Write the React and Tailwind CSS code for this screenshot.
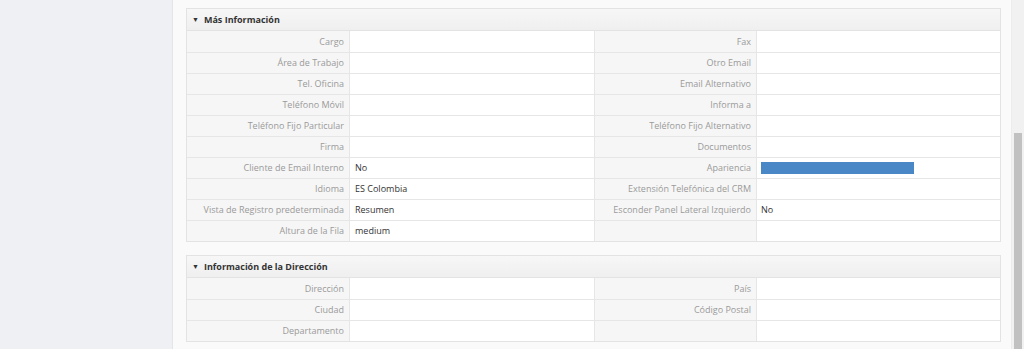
const MAS_INFO = [
  ['Cargo', '', 'Fax', ''],
  ['Área de Trabajo', '', 'Otro Email', ''],
  ['Tel. Oficina', '', 'Email Alternativo', ''],
  ['Teléfono Móvil', '', 'Informa a', ''],
  ['Teléfono Fijo Particular', '', 'Teléfono Fijo Alternativo', ''],
  ['Firma', '', 'Documentos', ''],
  ['Cliente de Email Interno', 'No', 'Apariencia', 'bar'],
  ['Idioma', 'ES Colombia', 'Extensión Telefónica del CRM', ''],
  ['Vista de Registro predeterminada', 'Resumen', 'Esconder Panel Lateral Izquierdo', 'No'],
  ['Altura de la Fila', 'medium', '', ''],
]

const DIRECCION = [
  ['Dirección', '', 'País', ''],
  ['Ciudad', '', 'Código Postal', ''],
  ['Departamento', '', '', ''],
]

function Value({ v }) {
  if (v === 'bar') {
    return <div className="h-[12px] w-[153px] bg-[#4a87c6]" />
  }
  return <span className="text-[#333]">{v}</span>
}

function Row({ r, first }) {
  return (
    <div className={`flex h-[21px] ${first ? '' : 'border-t border-[#e6e6e6]'}`}>
      <div className="flex w-[162px] items-center justify-end bg-[#f6f6f6] pr-[5px] text-[#9a9a9a]">
        {r[0]}
      </div>
      <div className="flex w-[245px] items-center border-l border-[#e6e6e6] bg-white pl-[5px]">
        <Value v={r[1]} />
      </div>
      <div className="flex w-[162px] items-center justify-end border-l border-[#e6e6e6] bg-[#f6f6f6] pr-[5px] text-[#9a9a9a]">
        {r[2]}
      </div>
      <div className="flex flex-1 items-center border-l border-[#e6e6e6] bg-white pl-[4px]">
        <Value v={r[3]} />
      </div>
    </div>
  )
}

function Block({ title, rows }) {
  return (
    <div className="border border-[#e3e3e3] bg-white">
      <div className="flex h-[22px] items-center gap-[5px] border-b border-[#e3e3e3] bg-gradient-to-b from-[#f7f7f7] to-[#efefef] pl-[5px] font-bold text-[#333]">
        <span className="text-[7px] leading-none">▼</span>
        <span>{title}</span>
      </div>
      {rows.map((r, i) => (
        <Row key={i} r={r} first={i === 0} />
      ))}
    </div>
  )
}

export default function App() {
  return (
    <div
      className="flex h-[349px] w-[1024px] overflow-hidden text-[9px]"
      style={{ fontFamily: '"Open Sans", "Liberation Sans", sans-serif' }}
    >
      <div className="w-[172px] shrink-0 bg-[#eef0f3]" />
      <div className="flex flex-1 flex-col gap-[13px] border-l border-[#e3e5e8] border-r border-r-[#ececec] bg-[#fafafa] pl-[13px] pr-[10px] pt-[8px]">
        <Block title="Más Información" rows={MAS_INFO} />
        <Block title="Información de la Dirección" rows={DIRECCION} />
      </div>
      <div className="flex w-[12px] shrink-0 flex-col bg-[#f1f1f1] pt-[133px]">
        <div className="mx-[2px] flex-1 bg-[#c1c1c1]" />
      </div>
    </div>
  )
}
